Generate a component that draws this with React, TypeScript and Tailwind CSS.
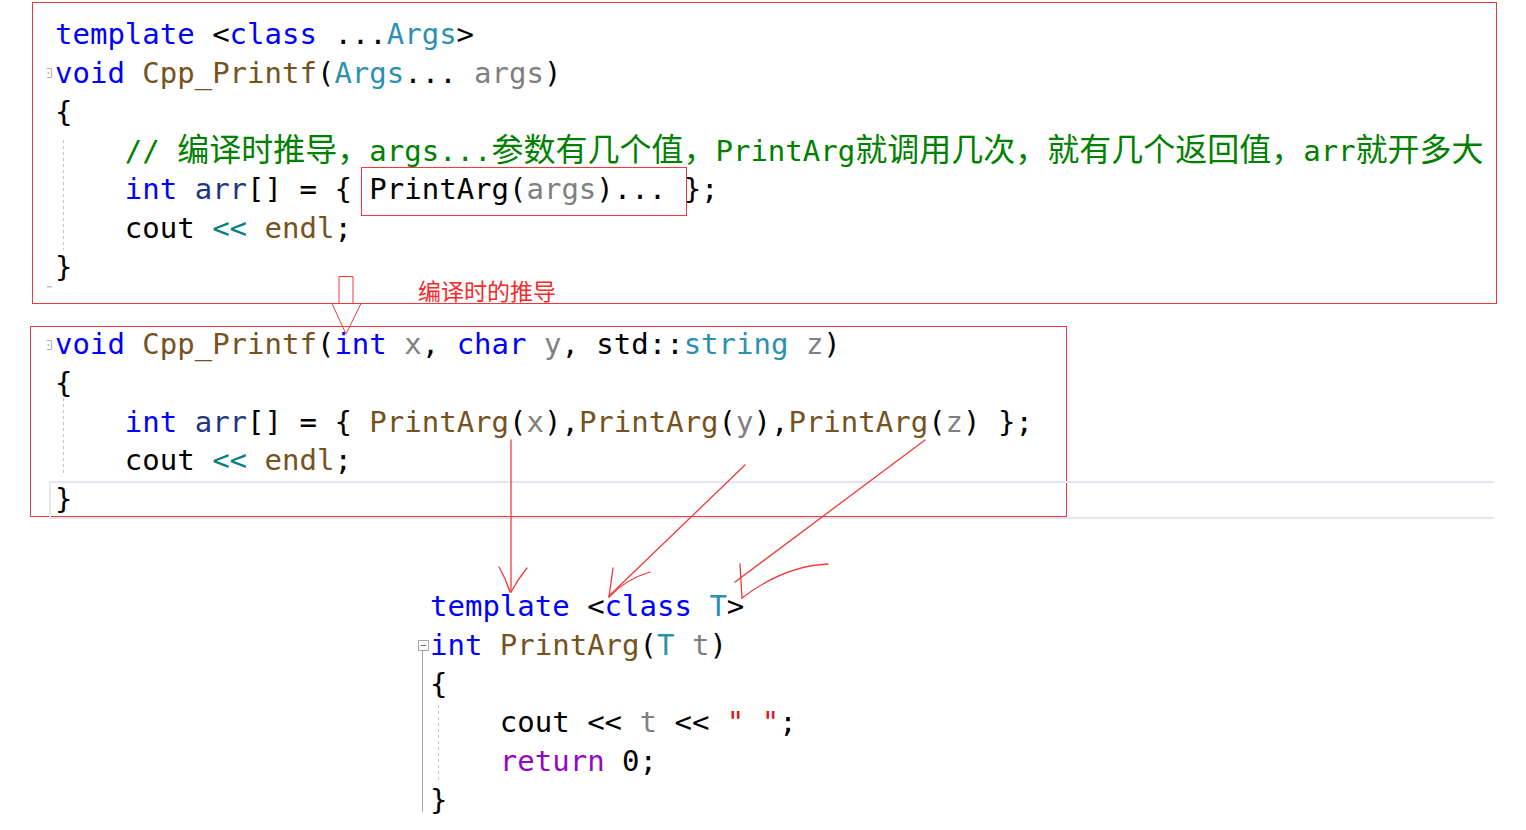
import React from "react";

// syntax colours, VS light theme
const Kw = ({ children }: { children: React.ReactNode }) => <span className="text-[#0000ff]">{children}</span>;
const Fn = ({ children }: { children: React.ReactNode }) => <span className="text-[#74531f]">{children}</span>;
const Ty = ({ children }: { children: React.ReactNode }) => <span className="text-[#2b91af]">{children}</span>;
const Pa = ({ children }: { children: React.ReactNode }) => <span className="text-[#808080]">{children}</span>;
const Lv = ({ children }: { children: React.ReactNode }) => <span className="text-[#1f377f]">{children}</span>;
const Op = ({ children }: { children: React.ReactNode }) => <span className="text-[#008080]">{children}</span>;
const Cjk = ({ children }: { children: React.ReactNode }) => (
  <span className="font-['Noto_Sans_CJK_SC',sans-serif] text-[32px] leading-none">{children}</span>
);

const Line = ({ children }: { children?: React.ReactNode }) => (
  <div className="h-[38.8px] leading-[38.8px] whitespace-pre">{children}</div>
);

function Overlay() {
  const red = "#f03a3a";
  return (
    <svg className="absolute left-0 top-0 pointer-events-none" width={1526} height={830} viewBox="0 0 1526 830">
      {/* fold markers (clipped) */}
      <path d="M46.5,68.5 H51.5 V77.5 H46.5" fill="none" stroke="#b4b4b4" />
      <rect x={47.5} y={72.5} width={2} height={1} fill="#909090" />
      <path d="M46.5,340.5 H51.5 V349.5 H46.5" fill="none" stroke="#b4b4b4" />
      <rect x={47.5} y={344.5} width={2} height={1} fill="#909090" />
      <rect x={47} y={286} width={5} height={1.5} fill="#c0c0c0" />

      {/* indent guides */}
      <line x1={63.5} y1={140} x2={63.5} y2={250} stroke="#c4c4c4" strokeDasharray="3 3" />
      <line x1={63.5} y1={398} x2={63.5} y2={474} stroke="#c4c4c4" strokeDasharray="3 3" />
      <line x1={438.5} y1={705} x2={438.5} y2={782} stroke="#c8c8c8" strokeDasharray="3 3" />

      {/* current line highlight */}
      <path d="M1494,482 H50 V518 H1494" fill="none" stroke="#e6e6f0" strokeWidth={2} />

      {/* bottom fold box */}
      <rect x={418.5} y={640.5} width={10} height={10} fill="#fff" stroke="#a8a8a8" />
      <line x1={421} y1={645.5} x2={426} y2={645.5} stroke="#707070" />
      <line x1={422.5} y1={651} x2={422.5} y2={812} stroke="#a8a8a8" />

      {/* annotations */}
      <rect x={361.5} y={167.5} width={325} height={48} fill="none" stroke={red} />
      <path d="M339,276.5 H353 V303.5 H361 L346,334 L332,303.5 H339 Z" fill="none" stroke={red} />

      <g fill="none" stroke={red} strokeWidth={1.3} strokeLinecap="round">
        <path d="M511,440 L511,592" />
        <path d="M499,567 Q506,579 510,592" />
        <path d="M527,568 Q518,579 511,592" />

        <path d="M745,465 L609,596" />
        <path d="M613,568 L609,597" />
        <path d="M650,572 Q626,579 609,597" />

        <path d="M925,440 L735,582" />
        <path d="M740,564 L742,598" />
        <path d="M828,564 Q784,566 742,598" />
      </g>
    </svg>
  );
}

export default function App() {
  return (
    <div className="relative w-[1526px] h-[830px] bg-white overflow-hidden text-black text-[29px] font-['DejaVu_Sans_Mono','Noto_Sans_CJK_SC',monospace]">
      {/* variadic version */}
      <div className="ml-[32px] mt-[2px] w-[1465px] h-[302px] border border-[#ec3a40] pl-[22px] pt-[12px]">
        <Line>
          <Kw>template</Kw> &lt;<Kw>class</Kw> ...<Ty>Args</Ty>&gt;
        </Line>
        <Line>
          <Kw>void</Kw> <Fn>Cpp_Printf</Fn>(<Ty>Args</Ty>... <Pa>args</Pa>)
        </Line>
        <Line>{"{"}</Line>
        <Line>
          {"    "}
          <span className="text-[#008000]">
            // <Cjk>编译时推导，</Cjk>args...<Cjk>参数有几个值，</Cjk>PrintArg<Cjk>就调用几次，就有几个返回值，</Cjk>arr<Cjk>就开多大</Cjk>
          </span>
        </Line>
        <Line>
          {"    "}<Kw>int</Kw> <Lv>arr</Lv>[] = {"{"} PrintArg(<Pa>args</Pa>)... {"};"}
        </Line>
        <Line>
          {"    "}cout <Op>&lt;&lt;</Op> <Fn>endl</Fn>;
        </Line>
        <Line>{"}"}</Line>
      </div>

      {/* expanded at compile time */}
      <div className="ml-[30px] mt-[22px] w-[1037px] h-[191px] border border-[#ec3a40] pl-[24px]">
        <div className="-mt-[2px]">
          <Line>
            <Kw>void</Kw> <Fn>Cpp_Printf</Fn>(<Kw>int</Kw> <Pa>x</Pa>, <Kw>char</Kw> <Pa>y</Pa>, std::<Ty>string</Ty> <Pa>z</Pa>)
          </Line>
          <Line>{"{"}</Line>
          <Line>
            {"    "}<Kw>int</Kw> <Lv>arr</Lv>[] = {"{"} <Fn>PrintArg</Fn>(<Pa>x</Pa>),<Fn>PrintArg</Fn>(<Pa>y</Pa>),<Fn>PrintArg</Fn>(<Pa>z</Pa>) {"};"}
          </Line>
          <Line>
            {"    "}cout <Op>&lt;&lt;</Op> <Fn>endl</Fn>;
          </Line>
          <Line>{"}"}</Line>
        </div>
      </div>

      {/* helper template */}
      <div className="ml-[430px] mt-[70px]">
        <Line>
          <Kw>template</Kw> &lt;<Kw>class</Kw> <Ty>T</Ty>&gt;
        </Line>
        <Line>
          <Kw>int</Kw> <Fn>PrintArg</Fn>(<Ty>T</Ty> <Pa>t</Pa>)
        </Line>
        <Line>{"{"}</Line>
        <Line>
          {"    "}cout &lt;&lt; <Pa>t</Pa> &lt;&lt; <span className="text-[#e01515]">" "</span>;
        </Line>
        <Line>
          {"    "}<span className="text-[#8f08c4]">return</span> 0;
        </Line>
        <Line>{"}"}</Line>
      </div>

      <Overlay />

      <div className="absolute left-[418px] top-[279px] text-[23px] leading-none text-[#f52a2a] font-['Noto_Sans_CJK_SC',sans-serif]">
        编译时的推导
      </div>
    </div>
  );
}
